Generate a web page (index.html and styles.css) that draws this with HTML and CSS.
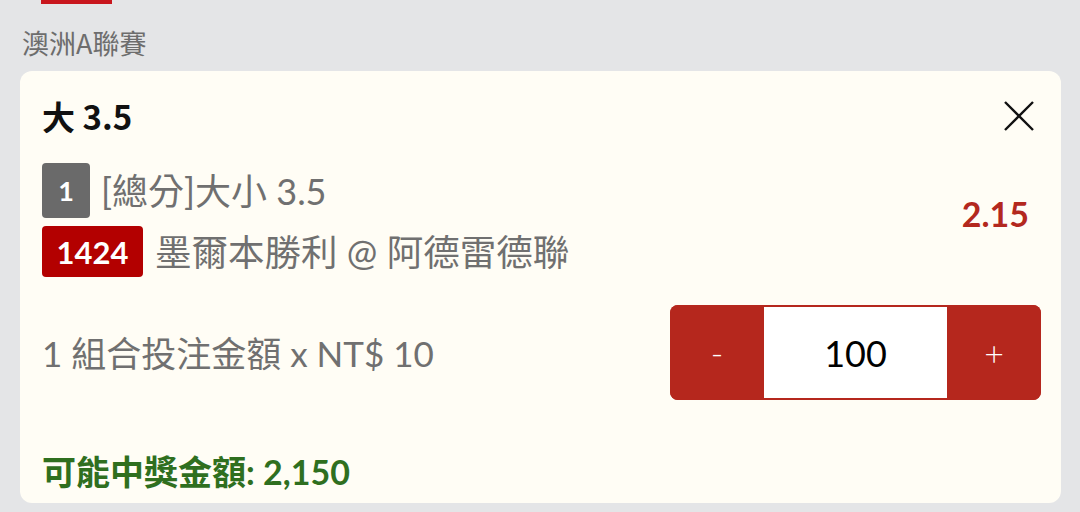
FILE: index.html
```html
<!DOCTYPE html>
<html>
<head>
    <meta charset="utf-8">
    <title>投注單</title>
    <link rel="stylesheet" href="styles.css">
</head>
<body>
    <div class="top-tab"></div>
    <div class="league">澳洲A聯賽</div>

    <div class="slip">
        <div class="slip-head">
            <div class="slip-title">大 3.5</div>
            <button class="close-btn" aria-label="關閉">
                <svg width="30" height="30" viewBox="0 0 30 30">
                    <path d="M1 1 L29 29 M29 1 L1 29" stroke="#111" stroke-width="2.4" fill="none"/>
                </svg>
            </button>
        </div>

        <div class="selection">
            <div class="sel-lines">
                <div class="sel-line">
                    <span class="badge badge-gray">1</span>
                    <span class="sel-text">[總分]大小 3.5</span>
                </div>
                <div class="sel-line">
                    <span class="badge badge-red">1424</span>
                    <span class="sel-text">墨爾本勝利 @ 阿德雷德聯</span>
                </div>
            </div>
            <div class="odds">2.15</div>
        </div>

        <div class="stake-row">
            <div class="stake-label">1 組合投注金額 x NT$ 10</div>
            <div class="stepper">
                <button class="step-btn">-</button>
                <input class="step-input" type="text" value="100">
                <button class="step-btn">+</button>
            </div>
        </div>

        <div class="payout">可能中獎金額: 2,150</div>
    </div>
</body>
</html>
```

FILE: styles.css
```css
body {
    margin: 0;
    padding: 0;
    background: #e4e5e7;
    font-family: Lato, "Noto Sans CJK TC", sans-serif;
}

.top-tab {
    width: 71px;
    height: 4px;
    margin-left: 41px;
    background: #c8161d;
}

.league {
    margin: 22px 0 0 22px;
    font-family: "Noto Sans CJK TC", sans-serif;
    font-size: 27px;
    line-height: 34px;
    color: #6d6d6d;
}

.slip {
    margin: 11px 19px 0 20px;
    padding: 25px 20px 11px 22px;
    background: #fffdf5;
    border-radius: 12px;
}

.slip-head {
    display: flex;
    align-items: center;
    justify-content: space-between;
    height: 40px;
}

.slip-title {
    font-family: "Noto Sans CJK TC", sans-serif;
    font-size: 33px;
    line-height: 40px;
    font-weight: bold;
    color: #111;
}

.close-btn {
    border: none;
    background: none;
    padding: 0;
    margin-right: 7px;
    width: 30px;
    height: 30px;
    cursor: pointer;
}

.close-btn svg {
    display: block;
}

.selection {
    display: flex;
    align-items: center;
    justify-content: space-between;
    margin-top: 27px;
}

.sel-lines {
    display: flex;
    flex-direction: column;
    gap: 8px;
}

.sel-line {
    display: flex;
    align-items: center;
}

.badge {
    display: flex;
    align-items: center;
    justify-content: center;
    color: white;
    font-weight: bold;
    border-radius: 4px;
}

.badge-gray {
    width: 48px;
    height: 55px;
    background: #6a6a6a;
    font-size: 27px;
    margin-right: 11px;
}

.badge-red {
    width: 101px;
    height: 51px;
    background: #b30000;
    font-size: 31px;
    margin-right: 12px;
}

.sel-text {
    font-size: 36px;
    line-height: 44px;
    color: #707070;
}

.sel-line + .sel-line .sel-text {
    font-size: 36.5px;
}

.odds {
    font-size: 34px;
    font-weight: bold;
    color: #b3281e;
    margin: 0 12px 14px 0;
}

.stake-row {
    display: flex;
    align-items: center;
    justify-content: space-between;
    margin-top: 28px;
}

.stake-label {
    font-size: 35px;
    line-height: 44px;
    color: #707070;
}

.stepper {
    display: flex;
    width: 371px;
    height: 95px;
    background: #b5271d;
    border-radius: 8px;
    overflow: hidden;
}

.step-btn {
    width: 94px;
    border: none;
    background: #b5271d;
    color: white;
    font-family: Lato, sans-serif;
    font-size: 34px;
    font-weight: 300;
    padding: 0;
    cursor: pointer;
}

.step-input {
    width: 183px;
    margin: 2px 0;
    border: none;
    outline: none;
    background: white;
    text-align: center;
    font-family: Lato, sans-serif;
    font-size: 36px;
    color: #000;
    padding: 0;
}

.payout {
    margin-top: 52px;
    font-size: 34px;
    font-weight: bold;
    line-height: 40px;
    color: #2f6f1f;
}
```
